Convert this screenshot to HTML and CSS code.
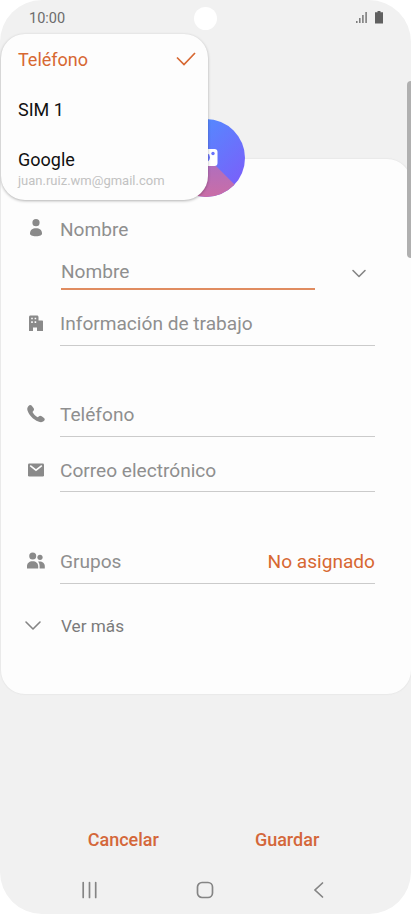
FILE: index.html
```
<!DOCTYPE html>
<html lang="es">
<head>
    <meta charset="UTF-8">
    <meta name="viewport" content="width=device-width, initial-scale=1.0">
    <title>Contacto nuevo</title>
    <link rel="stylesheet" href="styles.css">
</head>
<body>
<div class="screen">
    <!-- barra de estado -->
    <header class="status-bar">
        <span class="time">10:00</span>
        <span class="camera"></span>
        <svg class="status-icons" width="28" height="14" viewBox="0 0 28 14">
            <path d="M.8 10v2M3.8 7v5M6.9 4v8M10.1 1v11" fill="none" stroke="#777" stroke-width="1.5"/>
            <path d="M21.5 0h3v1.2H27V12.6h-8V1.2h2.5z" fill="#606060"/>
        </svg>
    </header>

    <!-- foto -->
    <div class="photo-box">
        <svg width="78" height="78" viewBox="0 0 78 78">
            <defs>
                <linearGradient id="blue" x1="0" y1="0" x2="1" y2="1">
                    <stop offset="0.2" stop-color="#528cff"/>
                    <stop offset="0.85" stop-color="#7862fa"/>
                </linearGradient>
                <linearGradient id="pink" x1="0" y1="0" x2="0" y2="1">
                    <stop offset="0" stop-color="#a96fc4"/>
                    <stop offset="1" stop-color="#ca6da6"/>
                </linearGradient>
                <clipPath id="round"><circle cx="39" cy="39" r="39"/></clipPath>
            </defs>
            <g clip-path="url(#round)">
                <path d="M0 0h78v78H0z" fill="url(#blue)"/>
                <path d="M39 37L78 76v2H0v-2z" fill="url(#pink)"/>
            </g>
            <rect x="28" y="30" width="22.5" height="17" rx="3" fill="#fff"/>
            <circle cx="38.500" cy="38.5" r="4.500" fill="#6a74fb"/>
            <circle cx="46" cy="34.5" r="1.7" fill="#6a74fb"/>
        </svg>
    </div>

    <!-- datos del contacto -->
    <main class="card">
        <section class="row name">
            <svg class="icon" width="20" height="20" viewBox="0 0 20 20">
                <circle cx="10" cy="4.7" r="3.6"/>
                <path d="M4 15.5C4 12 6.5 10.3 10 10.3s6 1.7 6 5.2c0 1.700-1.800 2.700-6 2.700s-6-1-6-2.700z"/>
            </svg>
            <span class="field plain">Nombre</span>
        </section>
        <section class="row input-row">
            <span class="field active">Nombre</span>
            <svg class="arrow" width="16" height="10" viewBox="0 0 16 10"><path d="M2 1.500l6 6 6-6"/></svg>
        </section>
        <section class="row work">
            <svg class="icon" width="20" height="20" viewBox="0 0 20 20">
                <path fill-rule="evenodd" d="M4.500 2.500h6.500c.9 0 1.500.6 1.500 1.500v3.500H16c.6 0 1 .4 1 1V18h-6v-3.500H7V18H3V4c0-.9.6-1.500 1.500-1.500zM5.200 4.700v1.600h1.600V4.700zm3.400 0v1.600h1.600V4.700zM5.200 8.300v1.600h1.600V8.300zm3.400 0v1.600h1.600V8.300z"/>
            </svg>
            <span class="field">Información de trabajo</span>
        </section>
        <section class="row phone">
            <svg class="icon" width="20" height="20" viewBox="0 0 20 20">
                <path d="M2.300 2.200C3.300 1 4.600.6 5.600 1.600L7.500 4c.8 1 .7 2.100-.2 3l-.8.9c1.100 2.200 2.900 4 5.200 5.400l1-.9c.9-.8 2-.9 3-.1l2.300 1.800c1.100.9 1 2-.1 3-1.400 1.300-3.200 1.500-5.600.5C7.200 15.400 3.100 11.300 1.500 6.500c-.5-1.700-.2-3.100.8-4.300z"/>
            </svg>
            <span class="field">Teléfono</span>
        </section>
        <section class="row mail">
            <svg class="icon" width="20" height="20" viewBox="0 0 20 20">
                <rect x="2" y="3.500" width="16" height="13" rx="1.200"/>
                <path d="M4.200 5.700L10 10.200l5.800-4.500" fill="none" stroke="#fdfdfd" stroke-width="1.600"/>
            </svg>
            <span class="field">Correo electrónico</span>
        </section>
        <section class="row groups">
            <svg class="icon" width="20" height="20" viewBox="0 0 20 20">
                <circle cx="6.700" cy="5" r="3.500"/>
                <circle cx="14" cy="6.300" r="2.600"/>
                <path d="M1 17.500v-2.300c0-3 2.200-5 5.600-5s5.600 2 5.600 5v2.300zM12 10.500c3.900-.6 6.800 1.200 6.800 4.500v2.500h-5.200V15c0-1.800-.5-3.300-1.600-4.500z"/>
            </svg>
            <span class="field">Grupos <em class="value">No asignado</em></span>
        </section>
        <section class="row more">
            <svg class="arrow" width="18" height="12" viewBox="0 0 18 12"><path d="M2 2l7 7 7-7"/></svg>
            <span class="more-text">Ver más</span>
        </section>
    </main>

    <footer class="actions">
        <span class="btn">Cancelar</span>
        <span class="btn">Guardar</span>
    </footer>

    <nav class="nav-bar">
        <svg width="20" height="20" viewBox="0 0 20 20"><path d="M3.200 2.500v15M9.500 2.500v15M15.700 2.500v15"/></svg>
        <svg width="20" height="20" viewBox="0 0 20 20"><rect x="2.500" y="2.500" width="15" height="15" rx="4.500"/></svg>
        <svg width="20" height="20" viewBox="0 0 20 20"><path d="M13.500 3L6 10l7.500 7"/></svg>
    </nav>

    <!-- menú: dónde guardar el contacto -->
    <div class="menu">
        <div class="option selected">
            <span>Teléfono</span>
            <svg width="20" height="14" viewBox="0 0 20 14"><path d="M1 5.500l7 7L19 1"/></svg>
        </div>
        <div class="option">SIM 1</div>
        <div class="option account">
            <span>Google</span>
            <small>juan.ruiz.wm@gmail.com</small>
        </div>
    </div>
    <div class="scrollbar"></div>
</div>
</body>
</html>
```
FILE: styles.css
```
* { margin: 0; padding: 0; box-sizing: border-box; }
body {
    background: #fff;
    font-family: Roboto, "Liberation Sans", sans-serif;
}
svg { display: block; flex: none; }
em  { font-style: normal; }

.screen {
    position: relative;
    width: 411px;
    height: 914px;
    display: flex;
    flex-direction: column;
    overflow: hidden;
    background: #f1f1f1;
    border-radius: 42px;
}

/* barra de estado */
.status-bar {
    height: 36px;
    display: grid;
    grid-template-columns: 1fr 24px 1fr;
    align-items: center;
    padding: 0 27px 0 28px;
}
.time {
    padding-left: 1px;
    color: #6c6c6c;
    font-size: 14.5px;
}
.camera {
    width: 23px;
    height: 23px;
    border-radius: 50%;
    background: #fff;
}
.status-icons { justify-self: end; }

/* foto */
.photo-box {
    height: 123px;
    padding-top: 83px;
    display: flex;
    justify-content: center;
    z-index: 1;
}

/* datos */
.card {
    height: 535px;
    margin-left: 1px;
    padding: 46px 36px 0 0;
    background: #fdfdfd;
    border-radius: 24px;
    box-shadow: 0 0 1px 1px #e9e9e9;
}
.row {
    height: 56px;
    display: flex;
    align-items: center;
}
.icon {
    width: 20px;
    margin: 0 14px 0 25px;
    fill: #8a8a8a;
}
.field {
    flex: 1;
    height: 100%;
    display: flex;
    align-items: center;
    justify-content: space-between;
    padding-top: 12px;
    border-bottom: 1px solid #cbcbcb;
    color: #8f8f8f;
    font-size: 19.1px;
}
.row .icon { position: relative; top: 5px; }
.row.name { height: 48px; }
.row.name .icon { top: -1px; }
.plain {
    padding-top: 0;
    border: 0;
}
.input-row {
    height: 37px;
    padding-left: 60px;
}
.active {
    flex: none;
    width: 254px;
    padding-top: 2px;
    border-bottom: 2px solid #e08c60;
}
.arrow {
    fill: none;
    stroke: #858585;
    stroke-width: 1.6;
    stroke-linecap: round;
    stroke-linejoin: round;
}
.input-row .arrow { margin: 4px 0 0 36px; }
.phone { margin-top: 35px; }
.mail { height: 55px; }
.groups { margin-top: 36px; }
.value { color: #d76832; }
.more {
    height: 48px;
    margin-top: 18px;
    padding-left: 23px;
}
.more-text {
    margin-left: 19px;
    color: #7b7b7b;
    font-size: 17.2px;
}

/* botones */
.actions {
    height: 49px;
    margin-top: 121px;
    display: flex;
    justify-content: center;
    gap: 96px;
    align-items: center;
    padding-right: 4px;
}
.btn {
    color: #d4673a;
    font-size: 18px;
    font-weight: 500;
}
.nav-bar {
    height: 50px;
    display: flex;
    justify-content: space-between;
    align-items: center;
    padding: 2px 82px 0 80px;
}
.nav-bar svg {
    fill: none;
    stroke: #858585;
    stroke-width: 1.7;
    stroke-linecap: round;
}

/* menú */
.menu {
    position: absolute;
    top: 34px;
    left: 1px;
    z-index: 2;
    width: 207px;
    height: 166px;
    border-radius: 24px;
    background: #fdfdfd;
    box-shadow: 0 1px 3px rgba(0, 0, 0, .3);
}
.option {
    height: 50px;
    display: flex;
    align-items: center;
    justify-content: space-between;
    padding: 0 12px 0 17px;
    color: #111;
    font-size: 18px;
}
.selected { color: #d76832; }
.selected svg {
    fill: none;
    stroke: #d76832;
    stroke-width: 1.7;
}
.account {
    height: 56px;
    flex-direction: column;
    align-items: flex-start;
    justify-content: flex-end;
}
.account span { line-height: 22px; }
.account small {
    color: #c2c2c2;
    font-size: 13px;
    line-height: 19px;
}
.scrollbar {
    position: absolute;
    top: 81px;
    right: 0;
    z-index: 3;
    width: 4px;
    height: 177px;
    border-radius: 4px 0 0 4px;
    background: #b0b0b0;
}
```
